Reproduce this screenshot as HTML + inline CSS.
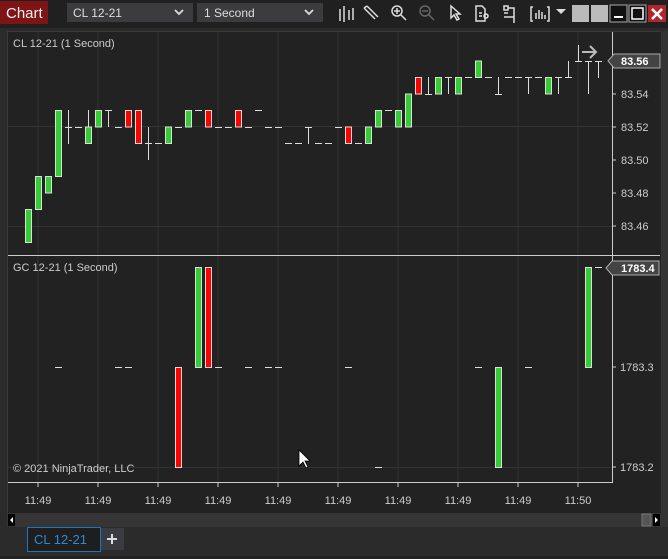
<!DOCTYPE html>
<html><head><meta charset="utf-8"><style>
*{margin:0;padding:0}
body{width:668px;height:559px;background:#2b2b2b;overflow:hidden;position:relative;font-family:"Liberation Sans",sans-serif}
svg{position:absolute;left:0;top:0}
</style></head><body>
<svg width="668" height="559" viewBox="0 0 668 559" font-family="Liberation Sans, sans-serif">
<!-- toolbar -->
<rect x="0" y="0" width="668" height="28" fill="#202020"/>
<rect x="0" y="1" width="48" height="23" fill="#7f1416"/>
<text x="6" y="18" font-size="15" fill="#f0f0f0">Chart</text>
<rect x="67" y="3" width="126" height="19" fill="#3c3c3e"/>
<text x="73" y="17" font-size="12" fill="#ddd">CL 12-21</text>
<path d="M175 10l4 4 4-4" stroke="#ddd" stroke-width="1.8" fill="none"/>
<rect x="197" y="3" width="126" height="19" fill="#3c3c3e"/>
<text x="204" y="17" font-size="12" fill="#ddd">1 Second</text>
<path d="M305 10l4 4 4-4" stroke="#ddd" stroke-width="1.8" fill="none"/>
<g stroke="#ddd" stroke-width="1.5" fill="none">
<path d="M340 9v12M344 6v16M349 10v10M353 8v12"/>
<path d="M364 8l11 11M367 6l11 11M364 8l3-2"/>
<circle cx="397" cy="11" r="5"/><path d="M401 15l5 5M394 11h6M397 8v6"/>
<circle cx="425" cy="11" r="5" stroke="#666"/><path d="M429 15l5 5M422 11h6" stroke="#666"/>
<path d="M451 6v12l3-3 3 5 2-1-3-5h4z"/>
<path d="M476 6h6l3 3v12h-9zM479 13h3M479 16h3"/><circle cx="486" cy="16" r="2"/>
<path d="M504 6h4v4h-4zM504 13h4M508 8h6v15M504 17h10"/>
<path d="M533 7h-2v14h2M547 7h2v14h-2M536 19v-6M539 19v-9M542 19v-7M545 19v-4"/>
</g>
<path d="M556 9h10l-5 5z" fill="#ddd"/>
<rect x="572" y="5" width="17" height="17" fill="#bbb"/>
<rect x="591" y="5" width="17" height="17" fill="#bbb"/>
<rect x="610" y="5" width="17" height="17" fill="#111" stroke="#aaa"/><rect x="614" y="16" width="9" height="2" fill="#fff"/>
<rect x="629" y="5" width="17" height="17" fill="#111" stroke="#aaa"/><rect x="632" y="8" width="11" height="11" fill="none" stroke="#fff" stroke-width="1.5"/>
<rect x="648" y="5" width="18" height="17" fill="#b3252a"/><path d="M652 9l10 10M662 9l-10 10" stroke="#fff" stroke-width="2.5"/>
<!-- chart area -->
<rect x="7" y="31" width="654" height="482" fill="#222"/>
<rect x="7" y="31" width="654" height="1" fill="#3a3a3a"/>
<rect x="7" y="31" width="1" height="496" fill="#3a3a3a"/>
<rect x="661" y="31" width="7" height="496" fill="#333"/>
<!-- grid -->
<g stroke="#333" stroke-width="1">
<path d="M38 32v450M98 32v450M158 32v450M218 32v450M278 32v450M338 32v450M398 32v450M458 32v450M518 32v450M578 32v450"/>
<path d="M8 126.5h604M8 226.5h604M8 467.5h604"/>
</g>
<path d="M8 255.5h604M8 482.5h604M612.5 32v451" stroke="#ccc"/>
<path d="M612 255.5h48" stroke="#ccc"/>
<!-- top ticks & labels -->
<g stroke="#ccc"><path d="M612 94h4M612 127h4M612 160h4M612 193h4M612 226h4M612 367h4M612 467h4"/>
<path d="M38 483v4M98 483v4M158 483v4M218 483v4M278 483v4M338 483v4M398 483v4M458 483v4M518 483v4M578 483v4"/></g>
<g font-size="11" fill="#ccc">
<text x="621" y="98">83.54</text><text x="621" y="131">83.52</text><text x="621" y="164">83.50</text><text x="621" y="197">83.48</text><text x="621" y="230">83.46</text>
<text x="620" y="371">1783.3</text><text x="620" y="471">1783.2</text>
</g>
<g font-size="11" fill="#ccc" text-anchor="middle">
<text x="38" y="504">11:49</text><text x="98" y="504">11:49</text><text x="158" y="504">11:49</text><text x="218" y="504">11:49</text><text x="278" y="504">11:49</text><text x="338" y="504">11:49</text><text x="398" y="504">11:49</text><text x="458" y="504">11:49</text><text x="518" y="504">11:49</text><text x="578" y="504">11:50</text>
</g>
<path d="M608 61l6-7h46v14h-46z" fill="#444" stroke="#aaa"/>
<text x="621" y="65" font-size="11" fill="#fff" font-weight="bold">83.56</text>
<path d="M606 268l6-7h47v14h-47z" fill="#444" stroke="#aaa"/>
<text x="621" y="272" font-size="11" fill="#fff" font-weight="bold">1783.4</text>
<text x="13" y="47" font-size="11" fill="#ccc">CL 12-21 (1 Second)</text>
<text x="13" y="271" font-size="11" fill="#ccc">GC 12-21 (1 Second)</text>
<text x="13" y="472" font-size="11" fill="#ccc">© 2021 NinjaTrader, LLC</text>
<!-- top candles -->
<g stroke="#ddd" stroke-width="1">
<g fill="#33cc33">
<rect x="25.5" y="209.5" width="6" height="33"/>
<rect x="35.5" y="176.5" width="6" height="33"/>
<rect x="45.5" y="176.5" width="6" height="16.5"/>
<rect x="55.5" y="110.5" width="6" height="66"/>
<rect x="85.5" y="127" width="6" height="16.5"/>
<rect x="95.5" y="110.5" width="6" height="16.5"/>
<rect x="165.5" y="127" width="6" height="16.5"/>
<rect x="185.5" y="110.5" width="6" height="16.5"/>
<rect x="365.5" y="127" width="6" height="16.5"/>
<rect x="375.5" y="110.5" width="6" height="16.5"/>
<rect x="395.5" y="110.5" width="6" height="16.5"/>
<rect x="405.5" y="94" width="6" height="33"/>
<rect x="435.5" y="77.5" width="6" height="16.5"/>
<rect x="455.5" y="77.5" width="6" height="16.5"/>
<rect x="475.5" y="61" width="6" height="16.5"/>
<rect x="545.5" y="77.5" width="6" height="16.5"/>
</g>
<g fill="#ff0000">
<rect x="125.5" y="110.5" width="6" height="16.5"/>
<rect x="135.5" y="110.5" width="6" height="33"/>
<rect x="205.5" y="110.5" width="6" height="16.5"/>
<rect x="235.5" y="110.5" width="6" height="16.5"/>
<rect x="345.5" y="127" width="6" height="16.5"/>
<rect x="415.5" y="77.5" width="6" height="16.5"/>
</g>
<path fill="none" d="
M68.5 110v34M65 127.5h7M75 127.5h7
M88.5 110v17
M108.5 110v17M105 110.5h7M115 127.5h7
M148.5 127v33M145 143.5h7M155 143.5h7
M175 127.5h7M195 110.5h7M215 127.5h7M225 127.5h7M245 127.5h7M255 110.5h7M265 127.5h7M275 127.5h7
M285 143.5h7M295 143.5h7M308.5 127v17M305 127.5h7M315 143.5h7M325 143.5h7
M335 127.5h7M355 143.5h7M385 110.5h7
M428.5 77v17M425 94.5h7M448.5 77v17M445 77.5h7M465 77.5h7M485 77.5h7
M498.5 77v17M495 94.5h7M505 77.5h7M515 77.5h7M528.5 77v17M525 77.5h7M535 77.5h7
M558.5 77v17M555 77.5h7M568.5 61v17M565 77.5h7M578.5 45v16M575 61.5h7
M588.5 61v33M585 61.5h7M598.5 61v17M595 61.5h7"/>
<path d="M582 52h14M590 46l6 6-6 6" stroke="#bbb" stroke-width="2" fill="none"/>
</g>
<!-- bottom bars -->
<g stroke="#ddd" stroke-width="1">
<rect x="175.5" y="367.5" width="6" height="100" fill="#ff0000"/>
<rect x="195.5" y="267.5" width="6" height="100" fill="#33cc33"/>
<rect x="205.5" y="267.5" width="6" height="100" fill="#ff0000"/>
<rect x="495.5" y="367.5" width="6" height="100" fill="#33cc33"/>
<rect x="585.5" y="267.5" width="6" height="100" fill="#33cc33"/>
<path d="M55 367.5h7M115 367.5h7M125 367.5h7M215 367.5h7M245 367.5h7M265 367.5h7M275 367.5h7M345 367.5h7M475 367.5h7M525 367.5h7M375 467.5h7M595 267.5h7"/>
</g>
<!-- mouse cursor -->
<path d="M299 450v16l4-4 3 6 2-1-3-6h5z" fill="#fff" stroke="#000" stroke-width="0.8"/>
<!-- scrollbar -->
<rect x="7" y="513" width="654" height="14" fill="#353535"/>
<rect x="8" y="514" width="7" height="12" fill="#000"/><path d="M13 517v6l-3-3z" fill="#fff"/>
<rect x="653" y="514" width="7" height="12" fill="#000"/><path d="M655 517v6l3-3z" fill="#fff"/>
<rect x="642" y="514" width="9" height="12" fill="#555" stroke="#777"/>
<!-- tabs -->
<rect x="27.5" y="527.5" width="73" height="24" fill="#1e1e1e" stroke="#1e73c0"/>
<text x="34" y="544" font-size="13" fill="#2a8ad8">CL 12-21</text>
<rect x="101" y="528" width="23" height="22" fill="#3b3b42"/>
<path d="M107 539h10M112 534v10" stroke="#ddd" stroke-width="2"/>
<rect x="0" y="556" width="668" height="3" fill="#222"/>
</svg>
</body></html>
